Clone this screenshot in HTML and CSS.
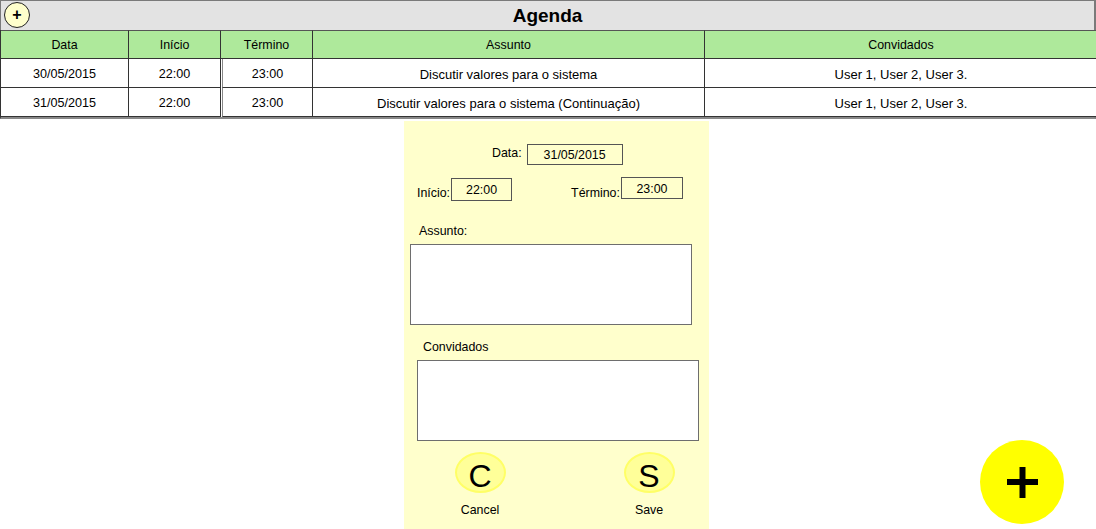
FILE: index.html
```html
<!DOCTYPE html>
<html lang="pt">
<head>
<meta charset="utf-8">
<title>Agenda</title>
<link rel="stylesheet" href="styles.css">
</head>
<body>
<div class="agenda">
  <div class="titlebar">
    <span class="mini-add">+</span>
    <h1 class="title">Agenda</h1>
  </div>
  <div class="grid">
    <div class="cell head">Data</div>
    <div class="cell head">Início</div>
    <div class="cell head">Término</div>
    <div class="cell head">Assunto</div>
    <div class="cell head">Convidados</div>

    <div class="cell num">30/05/2015</div>
    <div class="cell num">22:00</div>
    <div class="cell num term">23:00</div>
    <div class="cell">Discutir valores para o sistema</div>
    <div class="cell">User 1, User 2, User 3.</div>

    <div class="cell num">31/05/2015</div>
    <div class="cell num">22:00</div>
    <div class="cell num term">23:00</div>
    <div class="cell">Discutir valores para o sistema (Continuação)</div>
    <div class="cell">User 1, User 2, User 3.</div>
  </div>
</div>

<div class="panel">
  <div class="row-data">
    <span class="lbl">Data:</span>
    <span class="field f-data">31/05/2015</span>
  </div>
  <div class="row-time">
    <span class="lbl">Início:</span>
    <span class="field f-ini">22:00</span>
    <span class="lbl lbl-term">Término:</span>
    <span class="field f-term">23:00</span>
  </div>
  <div class="lbl-block lbl-assunto">Assunto:</div>
  <div class="box box-assunto"></div>
  <div class="lbl-block lbl-conv">Convidados</div>
  <div class="box box-conv"></div>
  <div class="actions">
    <div class="action">
      <span class="bubble">C</span>
      <span class="action-lbl">Cancel</span>
    </div>
    <div class="action">
      <span class="bubble">S</span>
      <span class="action-lbl">Save</span>
    </div>
  </div>
</div>

<div class="fab">
  <svg width="84" height="84" viewBox="0 0 84 84">
    <circle cx="42" cy="42" r="42" fill="#ffff00"/>
    <rect x="27" y="39" width="31" height="6" fill="#000"/>
    <rect x="39.5" y="27" width="6" height="31" fill="#000"/>
  </svg>
</div>
</body>
</html>
```

FILE: styles.css
```css
* { box-sizing: border-box; }

body {
  margin: 0;
  font-family: "Liberation Sans", Arial, sans-serif;
  font-size: 12px;
  color: #000;
  background: #fff;
  width: 1096px;
  height: 529px;
  overflow: hidden;
  position: relative;
}

.agenda {
  width: 1096px;
}

.titlebar {
  height: 30px;
  background: #e3e3e3;
  border-top: 1px solid #7a7a7a;
  border-left: 1px solid #7a7a7a;
  border-right: 2px solid #7a7a7a;
  display: flex;
  align-items: center;
  justify-content: center;
  position: relative;
}

.mini-add {
  position: absolute;
  left: 3px;
  top: 1px;
  width: 26px;
  height: 26px;
  border-radius: 50%;
  background: #ffffcc;
  border: 1.5px solid #222;
  display: flex;
  align-items: center;
  justify-content: center;
  font-weight: bold;
  font-size: 16px;
  line-height: 1;
  padding-bottom: 1px;
}

.title {
  margin: 0;
  font-size: 19px;
  font-weight: bold;
  line-height: 20px;
}

.grid {
  display: grid;
  grid-template-columns: 128px 92px 92px 392px 392px;
  grid-auto-rows: 29px;
  border-left: 1px solid #333;
  border-right: 2px solid #7a7a7a;
  border-bottom: 2px solid #888;
}

.cell {
  display: flex;
  align-items: center;
  justify-content: center;
  border-right: 1.5px solid #333;
  border-bottom: 1px solid #333;
  white-space: nowrap;
  padding-top: 2px;
  background: #fff;
  font-size: 13px;
}

.cell.num {
  font-size: 12.6px;
}

.cell:nth-child(5n) {
  border-right: none;
}

.cell.head {
  background: #aee99b;
  border-top: 1px solid #555;
  border-bottom: 1.5px solid #333;
  font-size: 12.4px;
  padding-top: 1px;
}

.cell.term {
  border-left: 1px solid #888;
  margin-left: 1px;
}

.panel {
  width: 305px;
  height: 409px;
  margin-left: 404px;
  margin-top: 2px;
  background: #ffffcc;
  display: flex;
  flex-direction: column;
  align-items: flex-start;
  font-size: 12.4px;
}

.row-data {
  margin-top: 23px;
  padding-left: 88px;
  height: 20px;
  display: flex;
  align-items: center;
}

.row-data .lbl {
  margin-top: -3px;
}

.field {
  display: flex;
  align-items: center;
  justify-content: center;
  background: #ffffcc;
  border: 1.5px solid #555;
  padding-top: 1px;
}

.f-data {
  width: 96px;
  height: 21px;
  margin-left: 5px;
  margin-top: 1px;
}

.row-time {
  margin-top: 14px;
  padding-left: 13px;
  height: 23px;
  display: flex;
  align-items: flex-end;
}

.row-time .lbl {
  padding-bottom: 1px;
}

.f-ini {
  width: 61px;
  height: 23px;
  margin-left: 1px;
}

.lbl-term {
  margin-left: 59px;
}

.f-term {
  width: 62px;
  height: 22px;
  margin-left: 1px;
  margin-top: -1px;
  align-self: flex-start;
}

.lbl-block {
  height: 14px;
  line-height: 14px;
}

.lbl-assunto {
  margin-top: 23px;
  margin-left: 15px;
}

.box {
  width: 282px;
  height: 81px;
  background: #fff;
  border: 1.5px solid #6e6e6e;
}

.box-assunto {
  margin-top: 6px;
  margin-left: 6px;
}

.lbl-conv {
  margin-top: 15px;
  margin-left: 19px;
}

.box-conv {
  margin-top: 6px;
  margin-left: 13px;
}

.actions {
  margin-top: 11px;
  padding-left: 50px;
  display: flex;
  gap: 117px;
}

.action {
  width: 52px;
  display: flex;
  flex-direction: column;
  align-items: center;
}

.bubble {
  width: 51px;
  height: 41px;
  border-radius: 50%;
  background: #ffff99;
  border: 2px solid #ffff66;
  display: flex;
  align-items: center;
  justify-content: center;
  font-size: 32px;
  line-height: 1;
  padding-top: 6px;
}

.action-lbl {
  margin-top: 10px;
  line-height: 14px;
}

.fab {
  position: absolute;
  left: 980px;
  top: 440px;
  width: 84px;
  height: 84px;
}

.fab svg {
  display: block;
}
```
